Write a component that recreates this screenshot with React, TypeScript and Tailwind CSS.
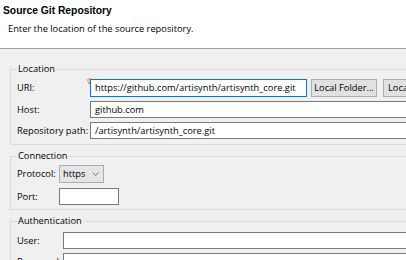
import React from "react";

const font = { fontFamily: '"Open Sans", "Noto Sans", sans-serif' };

const Hint = () => (
    <svg width="5" height="7" viewBox="0 0 5 7" className="shrink-0">
        <path d="M2.5 0.5 C1.2 0.5 0.5 1.3 0.5 2.3 C0.5 3.2 1.4 3.6 1.6 4.6 L3.4 4.6 C3.6 3.6 4.5 3.2 4.5 2.3 C4.5 1.3 3.8 0.5 2.5 0.5 Z" fill="#f7d27a" stroke="#d9892b" strokeWidth="0.8" />
        <path d="M1.8 5.6 L3.2 5.6" stroke="#8a6a3a" strokeWidth="0.9" />
    </svg>
);

const Field = ({ value, focused, width }: { value?: string, focused?: boolean, width: string }) => (
    <div className={`h-[17px] bg-white border flex items-center pl-[4px] whitespace-nowrap ${width} ${focused ? "border-[#0078d7]" : "border-[#7a7a7a]"}`}>
        {value}
    </div>
);

const Group = ({ title, children, className }: { title: string, children: React.ReactNode, className?: string }) => (
    <fieldset className={`ml-[10px] border border-[#dcdcdc] pl-[6px] ${className ?? ""}`}>
        <legend className="px-[1px] leading-[12px]">{title}</legend>
        {children}
    </fieldset>
);

const App = () => {
    return (
        <div className="w-[406px] h-[260px] overflow-hidden bg-[#f0f0f0] text-black text-[9.3px]" style={font}>
            <div className="w-[560px]">
                <div className="h-[49px] bg-white border-b border-[#a0a0a0] pl-[3px] pt-[4px]">
                    <div className="font-bold text-[10.3px] leading-[14px] font-['Liberation_Sans',sans-serif]">Source Git Repository</div>
                    <div className="pl-[5px] mt-[4px] leading-[14px]">Enter the location of the source repository.</div>
                </div>

                <Group title="Location" className="mt-[14px] pb-[5px] pt-[4px]">
                    <div className="flex items-center h-[18px]">
                        <span className="w-[70px]">URI:</span>
                        <div className="w-[3px] self-start -mt-[1px]"><Hint /></div>
                        <Field value="https://github.com/artisynth/artisynth_core.git" focused width="w-[217px] h-[18px]" />
                        <button className="ml-[4px] h-[18px] w-[66px] bg-[#e1e1e1] border border-[#adadad] whitespace-nowrap">Local Folder...</button>
                        <button className="ml-[6px] h-[18px] w-[66px] bg-[#e1e1e1] border border-[#adadad] text-left pl-[4px] whitespace-nowrap">Local File...</button>
                    </div>
                    <div className="flex items-center mt-[4px]">
                        <span className="w-[73px]">Host:</span>
                        <Field value="github.com" width="flex-1" />
                    </div>
                    <div className="flex items-center mt-[4px]">
                        <span className="w-[73px]">Repository path:</span>
                        <Field value="/artisynth/artisynth_core.git" width="flex-1" />
                    </div>
                </Group>

                <Group title="Connection" className="mt-[5px] pb-[4px] pt-[3px]">
                    <div className="flex items-center">
                        <span className="w-[42px]">Protocol:</span>
                        <div className="h-[18px] w-[45px] bg-[#e5e5e5] border border-[#adadad] flex items-center justify-between pl-[3px] pr-[4px]">
                            <span>https</span>
                            <svg width="7" height="4" viewBox="0 0 7 4">
                                <path d="M0.5 0.5 L3.5 3.5 L6.5 0.5" fill="none" stroke="#606060" strokeWidth="0.9" />
                            </svg>
                        </div>
                    </div>
                    <div className="flex items-center mt-[5px]">
                        <span className="w-[42px]">Port:</span>
                        <Field width="w-[60px]" />
                    </div>
                </Group>

                <Group title="Authentication" className="mt-[5px] pt-[5px]">
                    <div className="flex items-center">
                        <span className="w-[46px]">User:</span>
                        <Field width="flex-1" />
                    </div>
                    <div className="flex items-center mt-[4px]">
                        <span className="w-[46px]">Password:</span>
                        <Field width="flex-1" />
                    </div>
                </Group>
            </div>
        </div>
    );
};

export default App;
